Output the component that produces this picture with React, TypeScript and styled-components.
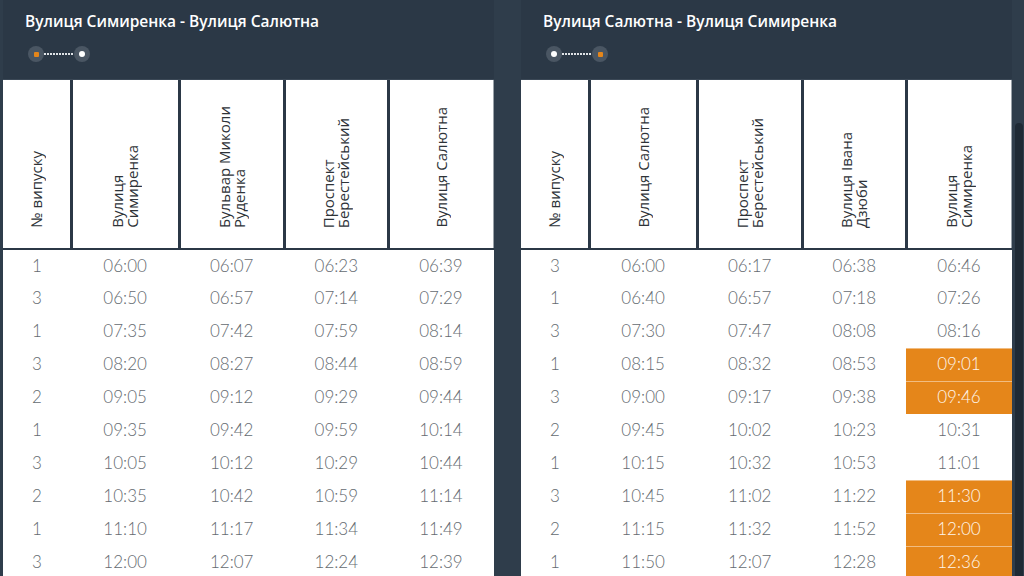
import React from 'react';
import styled, { createGlobalStyle } from 'styled-components';

const GlobalStyle = createGlobalStyle`
    html, body {
        margin: 0;
        padding: 0;
        background: #2f3d4b;
        overflow: hidden;
    }
`;

const Page = styled.div`
    position: relative;
    display: flex;
    gap: 27px;
    padding-left: 3px;
    width: 1024px;
    height: 576px;
    overflow: hidden;
    box-sizing: border-box;
`;

const Panel = styled.section`
    width: 491px;
    display: flex;
    flex-direction: column;
    flex: 0 0 auto;
`;

const PanelHeader = styled.header`
    flex: 0 0 80px;
    height: 80px;
    box-sizing: border-box;
    padding: 11px 22px 0;
    background: #2b3846;
    border-bottom: 1px solid #3b4856;
`;

const Title = styled.h2`
    margin: 0;
    font-family: 'Open Sans', 'Liberation Sans', sans-serif;
    font-weight: 600;
    font-size: 15.5px;
    line-height: 21px;
    color: #ffffff;
`;

const Route = styled.div`
    display: flex;
    align-items: center;
    margin-top: 14px;
    margin-left: 3px;
`;

const Stop = styled.span`
    width: 16px;
    height: 16px;
    border-radius: 50%;
    background: #4a5663;
    display: flex;
    align-items: center;
    justify-content: center;
`;

const Dot = styled.span<{ $active?: boolean }>`
    width: ${p => (p.$active ? '5px' : '6px')};
    height: ${p => (p.$active ? '5px' : '6px')};
    border-radius: ${p => (p.$active ? '1px' : '50%')};
    background: ${p => (p.$active ? '#e5861a' : '#ffffff')};
`;

const Dots = styled.span`
    width: 30px;
    height: 2px;
    background-image: repeating-linear-gradient(
        to right,
        #dfe3e7 0,
        #dfe3e7 2px,
        transparent 2px,
        transparent 3px
    );
`;

const Table = styled.table`
    border-collapse: collapse;
    table-layout: fixed;
    width: 100%;
    background: #ffffff;
`;

const HeadCell = styled.th`
    height: 152px;
    padding: 0 0 16px;
    vertical-align: bottom;
    text-align: center;
    background: #ffffff;
    border-left: 3px solid #2b3846;
    border-bottom: 2px solid #2b3846;
    &:first-child {
        border-left: none;
    }
    &:last-child {
        border-right: 1px solid #9aa2a9;
    }
`;

const HeadLabel = styled.span`
    display: inline-block;
    writing-mode: vertical-rl;
    text-orientation: sideways;
    transform: rotate(180deg);
    white-space: nowrap;
    font-family: 'Open Sans', 'Liberation Sans', sans-serif;
    font-weight: 400;
    font-size: 15px;
    line-height: 15px;
    color: #2e3338;
    text-align: start;
`;

const Row = styled.tr`
    height: 33px;
`;

const Cell = styled.td<{ $hl?: boolean }>`
    height: 33px;
    padding: 0 0 2px;
    box-sizing: border-box;
    text-align: center;
    font-family: 'Lato', 'Liberation Sans', sans-serif;
    font-weight: 300;
    font-size: 17px;
    color: ${p => (p.$hl ? '#fff6ec' : '#656b71')};
    background: ${p => (p.$hl ? '#e5861a' : '#ffffff')};
    box-shadow: ${p => (p.$hl ? 'inset 0 1px 0 rgba(255, 255, 255, 0.45)' : 'none')};
`;

const Scrollbar = styled.div`
    position: absolute;
    right: 1px;
    top: 123px;
    bottom: 0;
    width: 8px;
    border-radius: 4px 4px 0 0;
    background: #1f2a35;
`;

const widths = [68, 108, 105, 104, 105];

interface Schedule {
    title: string;
    reversed?: boolean;
    heads: string[][];
    rows: string[][];
    highlighted: number[];
}

const schedules: Schedule[] = [
    {
        title: 'Вулиця Симиренка - Вулиця Салютна',
        heads: [
            ['№ випуску'],
            ['Вулиця', 'Симиренка'],
            ['Бульвар Миколи', 'Руденка'],
            ['Проспект', 'Берестейський'],
            ['Вулиця Салютна'],
        ],
        rows: [
            ['1', '06:00', '06:07', '06:23', '06:39'],
            ['3', '06:50', '06:57', '07:14', '07:29'],
            ['1', '07:35', '07:42', '07:59', '08:14'],
            ['3', '08:20', '08:27', '08:44', '08:59'],
            ['2', '09:05', '09:12', '09:29', '09:44'],
            ['1', '09:35', '09:42', '09:59', '10:14'],
            ['3', '10:05', '10:12', '10:29', '10:44'],
            ['2', '10:35', '10:42', '10:59', '11:14'],
            ['1', '11:10', '11:17', '11:34', '11:49'],
            ['3', '12:00', '12:07', '12:24', '12:39'],
        ],
        highlighted: [],
    },
    {
        title: 'Вулиця Салютна - Вулиця Симиренка',
        reversed: true,
        heads: [
            ['№ випуску'],
            ['Вулиця Салютна'],
            ['Проспект', 'Берестейський'],
            ['Вулиця Івана', 'Дзюби'],
            ['Вулиця', 'Симиренка'],
        ],
        rows: [
            ['3', '06:00', '06:17', '06:38', '06:46'],
            ['1', '06:40', '06:57', '07:18', '07:26'],
            ['3', '07:30', '07:47', '08:08', '08:16'],
            ['1', '08:15', '08:32', '08:53', '09:01'],
            ['3', '09:00', '09:17', '09:38', '09:46'],
            ['2', '09:45', '10:02', '10:23', '10:31'],
            ['1', '10:15', '10:32', '10:53', '11:01'],
            ['3', '10:45', '11:02', '11:22', '11:30'],
            ['2', '11:15', '11:32', '11:52', '12:00'],
            ['1', '11:50', '12:07', '12:28', '12:36'],
        ],
        highlighted: [3, 4, 7, 8, 9],
    },
];

const RouteLine = ({ reversed }: { reversed?: boolean }) => (
    <Route>
        <Stop>
            <Dot $active={!reversed} />
        </Stop>
        <Dots />
        <Stop>
            <Dot $active={reversed} />
        </Stop>
    </Route>
);

const SchedulePanel = ({ schedule }: { schedule: Schedule }) => (
    <Panel>
        <PanelHeader>
            <Title>{schedule.title}</Title>
            <RouteLine reversed={schedule.reversed} />
        </PanelHeader>
        <Table>
            <colgroup>
                {widths.map((w, i) => (
                    <col key={i} style={{ width: w }} />
                ))}
            </colgroup>
            <thead>
                <tr>
                    {schedule.heads.map((lines, i) => (
                        <HeadCell key={i}>
                            <HeadLabel>
                                {lines.map((line, j) => (
                                    <React.Fragment key={j}>
                                        {j > 0 && <br />}
                                        {line}
                                    </React.Fragment>
                                ))}
                            </HeadLabel>
                        </HeadCell>
                    ))}
                </tr>
            </thead>
            <tbody>
                {schedule.rows.map((row, r) => (
                    <Row key={r}>
                        {row.map((value, c) => (
                            <Cell
                                key={c}
                                $hl={c === row.length - 1 && schedule.highlighted.includes(r)}
                            >
                                {value}
                            </Cell>
                        ))}
                    </Row>
                ))}
            </tbody>
        </Table>
    </Panel>
);

const App = () => (
    <>
        <GlobalStyle />
        <Page>
            {schedules.map((s, i) => (
                <SchedulePanel key={i} schedule={s} />
            ))}
            <Scrollbar />
        </Page>
    </>
);

export default App;
